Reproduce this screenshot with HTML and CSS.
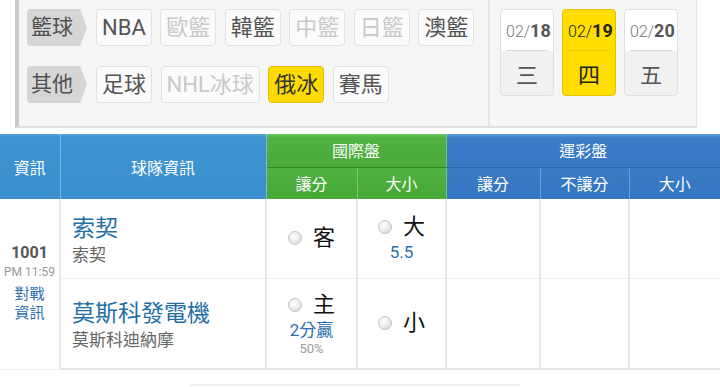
FILE: index.html
```html
<!DOCTYPE html>
<html lang="zh-Hant">
<head>
<meta charset="utf-8">
<link rel="stylesheet" href="styles.css">
</head>
<body>
<div class="panel">
  <div class="cats">
    <div class="row">
      <span class="tag">籃球</span>
      <span class="btn">NBA</span>
      <span class="btn off">歐籃</span>
      <span class="btn">韓籃</span>
      <span class="btn off">中籃</span>
      <span class="btn off">日籃</span>
      <span class="btn">澳籃</span>
    </div>
    <div class="row">
      <span class="tag">其他</span>
      <span class="btn">足球</span>
      <span class="btn off">NHL冰球</span>
      <span class="btn on">俄冰</span>
      <span class="btn">賽馬</span>
    </div>
  </div>
  <div class="dates">
    <div class="card">
      <div class="md"><span class="m">02/</span><b>18</b></div>
      <div class="wd">三</div>
    </div>
    <div class="card sel">
      <div class="md"><span class="m">02/</span><b>19</b></div>
      <div class="wd">四</div>
    </div>
    <div class="card">
      <div class="md"><span class="m">02/</span><b>20</b></div>
      <div class="wd">五</div>
    </div>
  </div>
</div>

<table class="grid">
  <colgroup>
    <col class="c1"><col class="c2"><col class="c3"><col class="c4"><col class="c5"><col class="c6"><col class="c7">
  </colgroup>
  <thead>
    <tr class="h1">
      <th rowspan="2" class="hb">資訊</th>
      <th rowspan="2" class="hb">球隊資訊</th>
      <th colspan="2" class="hg top">國際盤</th>
      <th colspan="3" class="hd top">運彩盤</th>
    </tr>
    <tr class="h2">
      <th class="hg">讓分</th>
      <th class="hg">大小</th>
      <th class="hd">讓分</th>
      <th class="hd">不讓分</th>
      <th class="hd">大小</th>
    </tr>
  </thead>
  <tbody>
    <tr class="r1">
      <td rowspan="2" class="info">
        <div class="num">1001</div>
        <div class="time">PM 11:59</div>
        <div class="vs">對戰<br>資訊</div>
      </td>
      <td class="team">
        <div class="tn">索契</div>
        <div class="ts">索契</div>
      </td>
      <td class="odd"><div class="pick"><span class="radio"></span><span class="ch">客</span></div></td>
      <td class="odd"><div class="pick"><span class="radio"></span><span class="ch">大</span></div><div class="val">5.5</div></td>
      <td></td><td></td><td></td>
    </tr>
    <tr class="r2">
      <td class="team">
        <div class="tn">莫斯科發電機</div>
        <div class="ts">莫斯科迪納摩</div>
      </td>
      <td class="odd"><div class="pick"><span class="radio"></span><span class="ch">主</span></div><div class="val">2分贏</div><div class="pct">50%</div></td>
      <td class="odd"><div class="pick"><span class="radio"></span><span class="ch">小</span></div></td>
      <td></td><td></td><td></td>
    </tr>
  </tbody>
</table>
<div class="more"></div>
</body>
</html>
```

FILE: styles.css
```css
* { box-sizing: border-box; }
body {
  margin: 0;
  background: #fff;
  font-family: Roboto, "Noto Sans CJK TC", sans-serif;
  width: 720px;
  height: 387px;
  overflow: hidden;
}
.panel {
  margin-left: 15px;
  width: 682px;
  height: 128px;
  display: flex;
  background: #f6f6f6;
  border-left: 4px solid #cbcbcb;
  border-bottom: 2px solid #e0e0e0;
  border-right: 1px solid #e6e6e6;
}
.cats {
  width: 471px;
  padding: 9px 0 0 8px;
  border-right: 2px solid #e6e6e6;
  display: flex;
  flex-direction: column;
  gap: 20px;
}
.row {
  display: flex;
  gap: 8.5px;
  height: 37px;
}
.tag {
  width: 60px;
  height: 37px;
  line-height: 37px;
  padding-left: 4px;
  font-size: 21px;
  color: #505050;
  background: #d6d6d6;
  border-radius: 4px 0 0 4px;
  clip-path: polygon(0 0, 53px 0, 60px 50%, 53px 100%, 0 100%);
  margin-right: 0.5px;
}
.btn {
  height: 37px;
  line-height: 35px;
  padding: 0 5px;
  font-size: 22px;
  color: #555;
  background: #fbfbfb;
  border: 1px solid #e2e2e2;
  border-radius: 4px;
  white-space: nowrap;
}
.btn.off { color: #c9c9c9; }
.btn.on {
  background: #ffdc00;
  border-color: #e0bc00;
  color: #333;
}
.dates {
  display: flex;
  gap: 8px;
  padding: 9px 0 0 10px;
}
.card {
  width: 54px;
  height: 87px;
  border: 1px solid #e0e0e0;
  border-radius: 4px;
  overflow: hidden;
  display: flex;
  flex-direction: column;
  background: linear-gradient(#ffffff 0, #ffffff 48%, #f1f1f1 48%);
  color: #555;
}
.card .md {
  height: 41px;
  padding-top: 10px;
  text-align: center;
  font-size: 16px;
  margin: 0 5px;
  border-bottom: 1px solid #d8d8d8;
}
.card .m { color: #777; font-weight: 300; }
.card b { font-size: 18px; font-weight: 700; color: #555; }
.card .wd {
  text-align: center;
  font-size: 22px;
  padding-top: 6px;
  color: #555;
}
.card.sel {
  background: #ffde00;
  border-color: #e3c000;
}
.card.sel .md { border-bottom-color: #f0c800; }
.card.sel .m, .card.sel b, .card.sel .wd { color: #222; }

.grid {
  margin-top: 6px;
  width: 720px;
  border-collapse: collapse;
  table-layout: fixed;
}
.c1 { width: 60px; } .c2 { width: 206px; } .c3 { width: 91px; } .c4 { width: 89px; }
.c5 { width: 94px; } .c6 { width: 89px; } .c7 { width: 91px; }
th {
  color: #fff;
  font-weight: 400;
  font-size: 16px;
  padding: 0;
}
.h1 { height: 33px; }
.h2 { height: 32px; }
.hb {
  background: linear-gradient(#54a5dc 0, #3d94d1 3px, #3a90cd 100%);
  border-right: 1px solid #7ab9e4;
}
.hg {
  background: linear-gradient(#4fb240, #47a836);
  border-right: 1px solid #7fc873;
}
.hg.top { border-bottom: 1px solid #2f8a25; background: linear-gradient(#6cc25d 0, #4fb240 4px, #49aa39 100%); }
.hd {
  background: linear-gradient(#3a7cc6, #3474c0);
  border-right: 1px solid #6a9fd8;
}
.hd.top { border-bottom: 1px solid #2c65a8; background: linear-gradient(#5aa0dc 0, #3a7cc6 4px, #3577c2 100%); }
th:last-child { border-right: none; }
td {
  padding: 0;
  border-right: 2px solid #e9e9e9;
  vertical-align: middle;
}
td:last-child { border-right: 1px solid #e9e9e9; }
.r1 { height: 79px; }
.r1 td { border-bottom: 1px solid #efefef; }
.r2 { height: 91px; }
.r2 td, .info { border-bottom: 2px solid #e4e4e4; }
.info { text-align: center; padding: 0 0 2px; }
.num { font-size: 16px; font-weight: 700; color: #555; line-height: 20px; }
.time { font-size: 12px; color: #999; line-height: 18px; }
.vs { font-size: 15px; color: #2b6fb0; line-height: 19px; margin-top: 4px; }
.team { padding: 6px 0 0 11px; }
.tn { font-size: 23px; color: #246ea6; line-height: 28px; }
.ts { font-size: 17px; color: #666; line-height: 24px; }
.odd { text-align: center; }
.pick {
  display: flex;
  align-items: center;
  justify-content: center;
  gap: 11px;
  height: 28px;
}
.radio {
  width: 14px;
  height: 14px;
  border-radius: 50%;
  border: 1px solid #c4c4c4;
  background: radial-gradient(circle at 40% 35%, #ffffff 0, #f0f0f0 40%, #cfcfcf 100%);
}
.ch { font-size: 22px; color: #111; line-height: 28px; }
.val { font-size: 17px; color: #2b6fb0; line-height: 22px; }
.pct { font-size: 13px; color: #999; line-height: 15px; }
.more {
  margin: 14px 0 0 190px;
  width: 330px;
  height: 2px;
  background: #f0f0f0;
}
```
